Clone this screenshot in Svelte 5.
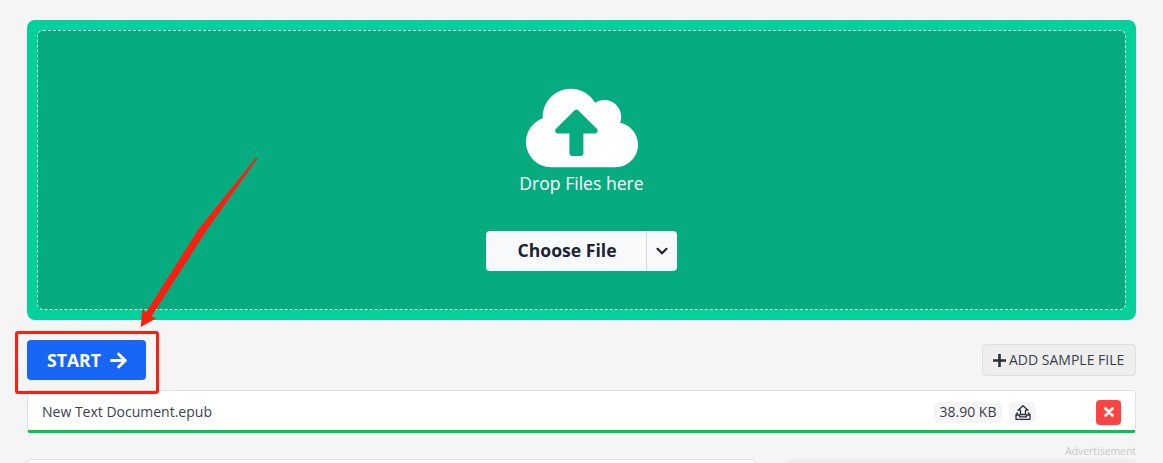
<script lang="ts">
	let fileName = 'New Text Document.epub';
	let fileSize = '38.90 KB';
</script>

<div class="page">
	<section class="dropzone">
		<div class="drop-inner">
			<svg class="cloud" viewBox="0 0 640 512" fill="#fff">
				<path
					d="M537.6 226.6c4.1-10.7 6.4-22.4 6.4-34.6 0-53-43-96-96-96-19.7 0-38.1 6-53.3 16.2C367 64.2 315.3 32 256 32c-88.4 0-160 71.6-160 160 0 2.7.1 5.4.2 8.1C40.2 219.8 0 273.2 0 336c0 79.5 64.5 144 144 144h368c70.7 0 128-57.3 128-128 0-61.9-44-113.6-102.4-125.4zM393.4 288H328v112c0 8.8-7.2 16-16 16h-48c-8.8 0-16-7.2-16-16V288h-65.4c-14.3 0-21.4-17.2-11.3-27.3l105.4-105.4c6.2-6.2 16.4-6.2 22.6 0l105.4 105.4c10.1 10.1 2.9 27.3-11.3 27.3z"
				/>
			</svg>
			<p class="drop-text">Drop Files here<span class="watermark">1704140838</span></p>
			<div class="choose">
				<button type="button" class="choose-main">Choose File</button>
				<button type="button" class="choose-more" aria-label="More sources">
					<svg viewBox="0 0 14 14" fill="none" stroke="#1d2433" stroke-width="2.2" stroke-linecap="round" stroke-linejoin="round">
						<path d="M2.5 4.8 7 9.3l4.5-4.5" />
					</svg>
				</button>
			</div>
		</div>
	</section>

	<div class="actions">
		<button type="button" class="start">
			START
			<svg viewBox="0 0 448 512" fill="#fff">
				<path d="M190.5 66.9l22.2-22.2c9.4-9.4 24.6-9.4 33.9 0L441 239c9.4 9.4 9.4 24.6 0 33.9L246.6 467.3c-9.4 9.4-24.6 9.4-33.9 0l-22.2-22.2c-9.500-9.500-9.300-25 .4-34.300L311.400 296H24c-13.300 0-24-10.700-24-24v-32c0-13.300 10.700-24 24-24h287.400L190.900 101.200c-9.800-9.300-10-24.800-.4-34.300z" />
			</svg>
		</button>
		<button type="button" class="sample">
			<svg viewBox="0 0 13 13" fill="none" stroke="#2b2f38" stroke-width="2.6">
				<path d="M6.500 0v13M0 6.500h13" />
			</svg>
			ADD SAMPLE FILE
		</button>
	</div>

	<div class="file-row">
		<span class="file-name">{fileName}</span>
		<span class="file-size">{fileSize}</span>
		<span class="file-upload">
			<svg viewBox="0 0 16 15" fill="none" stroke="#2b2f38" stroke-width="1.3" stroke-linejoin="round">
				<path d="M8 .7 13 5.200H10.500V9.500H5.500V5.200H3z" />
				<path d="M3 7.500 1 9.500V14.300H15V9.500L13 7.500M1 10H4.500V11.800H11.500V10H15" />
			</svg>
		</span>
		<button type="button" class="file-remove" aria-label="Remove">
			<svg viewBox="0 0 10 10" fill="none" stroke="#fff" stroke-width="2.800" stroke-linecap="round">
				<path d="M1.500 1.500l7 7M8.500 1.500l-7 7" />
			</svg>
		</button>
	</div>

	<div class="below">
		<div class="left-card"></div>
		<div class="side">
			<span class="ad-label">Advertisement</span>
			<div class="ad-box"></div>
		</div>
	</div>
</div>

<!-- annotation drawn over the screenshot -->
<div class="red-box"></div>
<svg class="red-arrow" viewBox="0 0 1163 463" fill="#fb1f10">
	<polygon points="140.700,327 142.300,309 146,312.500 198,230 256,157.500 257.500,158.500 205.500,232 151.500,316.500 156.700,318" />
</svg>

<style>
	:global(body) {
		margin: 0;
		background: #f5f5f5;
		overflow: hidden;
	}

	.page {
		height: 463px;
		overflow: hidden;
		box-sizing: border-box;
		padding: 20px 27px 0;
		font-family: 'Open Sans', sans-serif;
		color: #2b2f38;
	}

	.dropzone {
		height: 300px;
		box-sizing: border-box;
		padding: 10px;
		background: #03d19c;
		border-radius: 8px;
	}

	.drop-inner {
		height: 100%;
		box-sizing: border-box;
		display: flex;
		flex-direction: column;
		align-items: center;
		background: #06ac80;
		border: 1px dashed #fff;
		border-radius: 6px;
		padding-top: 52px;
	}

	.cloud {
		width: 112px;
		height: 90px;
		display: block;
	}

	.drop-text {
		position: relative;
		margin: -2px 0 0;
		font-size: 17.6px;
		line-height: 24px;
		color: #fff;
	}

	.watermark {
		position: absolute;
		left: -12px;
		top: 29px;
		font-family: 'Liberation Serif', serif;
		font-size: 20px;
		letter-spacing: 3.4px;
		line-height: 14px;
		color: rgba(0, 0, 0, 0.025);
	}

	.choose {
		display: flex;
		margin-top: 36px;
		height: 40px;
		width: 191px;
		background: #f8f9fb;
		border-radius: 4px;
	}

	.choose button {
		border: 0;
		background: transparent;
		padding: 0;
		font-family: inherit;
	}

	.choose .choose-main {
		flex: 1;
		padding: 0 0 2px 2px;
		font-size: 17.6px;
		font-weight: 700;
		color: #1d2433;
	}

	.choose-more {
		width: 31px;
		border-left: 1px solid #d9d9d9 !important;
		display: flex;
		align-items: center;
		justify-content: center;
	}

	.choose-more svg {
		width: 14px;
		height: 14px;
	}

	.actions {
		display: flex;
		align-items: center;
		justify-content: space-between;
		height: 40px;
		margin-top: 20px;
	}

	.start {
		display: flex;
		align-items: center;
		justify-content: center;
		gap: 9px;
		width: 119px;
		height: 40px;
		padding: 0 0 0 1px;
		border: 0;
		border-radius: 4px;
		background: #1766f5;
		color: #fff;
		font-family: inherit;
		font-size: 17.6px;
		font-weight: 700;
	}

	.start svg {
		width: 17px;
		height: 19px;
	}

	.sample {
		display: flex;
		align-items: center;
		gap: 3px;
		width: 154px;
		height: 32px;
		box-sizing: border-box;
		padding: 0 0 2px 10px;
		background: #eeeeee;
		border: 1px solid #e0e0e0;
		border-radius: 4px;
		color: #3a3f4a;
		font-family: inherit;
		font-size: 14px;
		white-space: nowrap;
	}

	.sample svg {
		width: 13px;
		height: 13px;
		flex: none;
		margin-top: 2px;
	}

	.file-row {
		display: flex;
		align-items: center;
		height: 43px;
		box-sizing: border-box;
		margin-top: 10px;
		padding: 3px 14px 0 15px;
		background: #fff;
		border: 1px solid #e2e2e6;
		border-bottom: 3px solid #00c853;
		border-radius: 3px;
	}

	.file-name {
		flex: 1;
		padding-bottom: 2px;
		font-size: 14px;
		color: #3a3f4a;
		margin-left: -1px;
	}

	.file-size {
		width: 68px;
		height: 21px;
		line-height: 19px;
		text-align: center;
		background: #f5f5f5;
		border-radius: 4px;
		font-size: 14px;
		color: #3a3f4a;
	}

	.file-upload {
		display: flex;
		align-items: center;
		justify-content: center;
		width: 27px;
		height: 21px;
		margin-left: 7px;
		background: #f5f5f5;
		border-radius: 4px;
	}

	.file-upload svg {
		width: 16px;
		height: 15px;
	}

	.file-remove {
		display: flex;
		align-items: center;
		justify-content: center;
		width: 25px;
		height: 25px;
		margin-left: 60px;
		padding: 0;
		border: 0;
		border-radius: 4px;
		background: #ff4343;
	}

	.file-remove svg {
		width: 10px;
		height: 10px;
	}

	.below {
		display: flex;
		justify-content: space-between;
		margin-top: 10px;
	}

	.left-card {
		width: 729px;
		height: 20px;
		box-sizing: border-box;
		margin-top: 16px;
		background: #fff;
		border: 1px solid #e2e2e6;
		border-radius: 4px;
	}

	.side {
		width: 349px;
		display: flex;
		flex-direction: column;
		align-items: flex-end;
	}

	.ad-label {
		font-size: 10.4px;
		line-height: 16px;
		color: #c8c8c8;
	}

	.ad-box {
		align-self: stretch;
		height: 20px;
		background: #eeeeee;
		border-radius: 4px;
	}

	.red-box {
		position: absolute;
		left: 15px;
		top: 331px;
		width: 144px;
		height: 63px;
		box-sizing: border-box;
		border: 3px solid #fb1f10;
		border-radius: 3px;
		pointer-events: none;
	}

	.red-arrow {
		position: absolute;
		left: 0;
		top: 0;
		width: 1163px;
		height: 463px;
		pointer-events: none;
	}
</style>
